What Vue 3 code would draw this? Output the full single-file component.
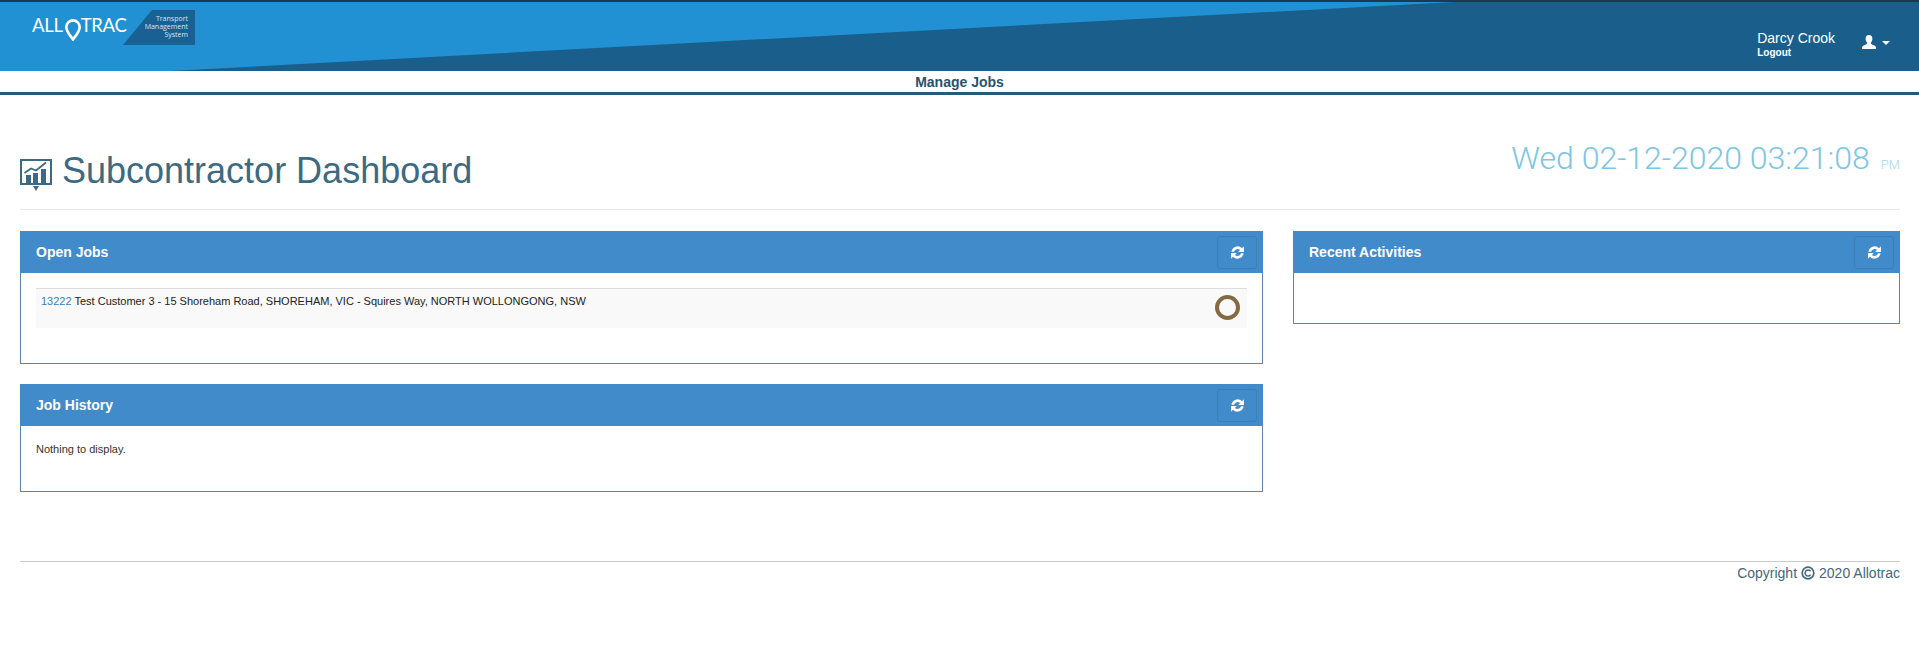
<script setup>
const refreshPath = "M2.6 8.2A6.6 6.6 0 0 1 13.8 4.4L15.8 2.4V8.6H9.6L11.8 6.4A3.9 3.9 0 0 0 5.3 8.2ZM15.4 9.8A6.6 6.6 0 0 1 4.2 13.6L2.2 15.6V9.4H8.4L6.2 11.6A3.9 3.9 0 0 0 12.7 9.8Z";
</script>

<template>
  <div class="page">
    <header class="topbar">
      <svg class="wedge" viewBox="0 0 1919 69" preserveAspectRatio="none" aria-hidden="true">
        <polygon points="170,69 1455,0 1919,0 1919,69" fill="#1a5f8c" />
      </svg>
      <div class="brand">
        <div class="wordmark">
          <span>ALL</span>
          <svg class="pin" viewBox="0 0 17 23" preserveAspectRatio="none" aria-hidden="true">
            <path d="M8.5 1.4A7.1 7.1 0 0 0 1.4 8.5C1.4 13 6 17.8 8.5 21.4C11 17.8 15.6 13 15.6 8.5A7.1 7.1 0 0 0 8.5 1.4Z" fill="none" stroke="#fff" stroke-width="2.8" />
          </svg>
          <span>TRAC</span>
        </div>
        <div class="tagline">
          <span>Transport</span>
          <span>Management</span>
          <span>System</span>
        </div>
      </div>
      <div class="user">
        <div class="user-text">
          <span class="user-name">Darcy Crook</span>
          <span class="logout">Logout</span>
        </div>
        <svg class="user-icon" viewBox="0 0 16 16" aria-hidden="true">
          <path d="M8 1C5.8 1 4.6 2.6 4.6 4.7C4.6 6.3 5.3 7.8 6.2 8.6C6.3 9.4 6 10 5 10.5C3.5 11.1 1.5 11.5 1 13.2V15H15V13.2C14.5 11.5 12.5 11.1 11 10.5C10 10 9.7 9.4 9.8 8.6C10.7 7.8 11.4 6.3 11.4 4.7C11.4 2.6 10.2 1 8 1Z" fill="#fff" />
        </svg>
        <span class="caret"></span>
      </div>
    </header>

    <nav class="subnav"><span>Manage Jobs</span></nav>

    <main class="content">
      <div class="title-row">
        <h1 class="title">
          <svg class="title-icon" viewBox="0 0 32 32" aria-hidden="true">
            <rect x="1" y="1" width="30" height="24" fill="none" stroke="#3c6a82" stroke-width="2" />
            <rect x="6" y="16" width="5" height="8" fill="#3c6a82" />
            <rect x="13" y="14" width="5" height="10" fill="#3c6a82" />
            <rect x="21" y="10" width="5" height="14" fill="#3c6a82" />
            <path d="M4.5 14L11 9.5L16 11.5L26 3.5" fill="none" stroke="#3c6a82" stroke-width="1.8" />
            <polygon points="13,27 19,27 16,32" fill="#3c6a82" />
          </svg>
          <span>Subcontractor Dashboard</span>
        </h1>
        <div class="clock">Wed 02-12-2020 03:21:08<small>PM</small></div>
      </div>

      <div class="columns">
        <div class="col-main">
          <section class="panel panel-open">
            <div class="panel-head">
              <h2>Open Jobs</h2>
              <button class="refresh" type="button" aria-label="Refresh">
                <svg viewBox="0 0 18 18" aria-hidden="true"><path :d="refreshPath" fill="#fff" /></svg>
              </button>
            </div>
            <div class="panel-body">
              <div class="job">
                <p class="job-text"><a class="job-id">13222</a> Test Customer 3 - 15 Shoreham Road, SHOREHAM, VIC - Squires Way, NORTH WOLLONGONG, NSW</p>
                <span class="status"></span>
              </div>
            </div>
          </section>

          <section class="panel panel-history">
            <div class="panel-head">
              <h2>Job History</h2>
              <button class="refresh" type="button" aria-label="Refresh">
                <svg viewBox="0 0 18 18" aria-hidden="true"><path :d="refreshPath" fill="#fff" /></svg>
              </button>
            </div>
            <div class="panel-body"><p class="empty">Nothing to display.</p></div>
          </section>
        </div>

        <div class="col-side">
          <section class="panel panel-recent">
            <div class="panel-head">
              <h2>Recent Activities</h2>
              <button class="refresh" type="button" aria-label="Refresh">
                <svg viewBox="0 0 18 18" aria-hidden="true"><path :d="refreshPath" fill="#fff" /></svg>
              </button>
            </div>
            <div class="panel-body"></div>
          </section>
        </div>
      </div>

      <footer class="footer">
        <span>Copyright</span>
        <svg class="copy" viewBox="0 0 14 14" aria-hidden="true">
          <circle cx="7" cy="7" r="5.8" fill="none" stroke="#44687c" stroke-width="1.7" />
          <path d="M9.6 8.6A3 3 0 1 1 9.6 5.4" fill="none" stroke="#44687c" stroke-width="1.5" />
        </svg>
        <span>2020 Allotrac</span>
      </footer>
    </main>
  </div>
</template>

<style>
html, body { margin: 0; background: #fff; }
</style>

<style scoped>
.page {
  width: 1919px;
  height: 648px;
  overflow: hidden;
  font-family: "Liberation Sans", Arial, sans-serif;
  background: #fff;
}
.topbar {
  position: relative;
  box-sizing: border-box;
  height: 71px;
  border-top: 2px solid #1c3a4e;
  background: #2191d3;
  display: flex;
  justify-content: space-between;
  align-items: flex-start;
}
.wedge { position: absolute; inset: 0; width: 100%; height: 100%; }
.brand {
  position: relative;
  display: flex;
  align-items: flex-start;
  margin: 8px 0 0 32px;
}
.wordmark {
  display: flex;
  align-items: flex-start;
  width: 91px;
  height: 34px;
  padding-top: 5px;
  box-sizing: border-box;
  font-family: Lato, sans-serif;
  font-size: 18.5px;
  line-height: 20px;
  color: #fff;
  letter-spacing: -0.3px;
}
.pin { width: 16px; height: 22px; margin: 4px 0 0 2px; flex: none; }
.tagline {
  width: 72px;
  height: 35px;
  box-sizing: border-box;
  padding: 5px 7px 0 0;
  background: #1a6193;
  clip-path: polygon(29px 0, 100% 0, 100% 100%, 0 100%);
  display: flex;
  flex-direction: column;
  align-items: flex-end;
  font-family: "Open Sans", sans-serif;
  font-size: 7px;
  line-height: 8px;
  color: #d6e6f0;
}
.user {
  position: relative;
  display: flex;
  align-items: flex-start;
  margin: 28px 29px 0 0;
}
.user-text { display: flex; flex-direction: column; color: #fff; }
.user-name { font-size: 14px; line-height: 17px; }
.logout { font-size: 10px; font-weight: 700; line-height: 12px; }
.user-icon { width: 16px; height: 16px; margin: 4px 0 0 26px; }
.caret {
  width: 0;
  height: 0;
  margin: 11px 0 0 5px;
  border-left: 4px solid transparent;
  border-right: 4px solid transparent;
  border-top: 4px solid #fff;
}
.subnav {
  height: 21px;
  border-bottom: 3px solid #275a78;
  display: flex;
  justify-content: center;
  align-items: center;
  font-size: 14px;
  font-weight: 700;
  color: #27536e;
}
.content { padding: 0 19px 0 20px; }
.title-row {
  height: 115px;
  box-sizing: border-box;
  border-bottom: 1px solid #e9e9e9;
  display: flex;
  justify-content: space-between;
  align-items: flex-start;
}
.title {
  margin: 55px 0 0;
  display: flex;
  align-items: flex-start;
  font-size: 36px;
  font-weight: 400;
  line-height: 42px;
  color: #3c6a82;
}
.title-icon { width: 32px; height: 32px; margin: 9px 10px 0 0; }
.clock {
  margin-top: 44px;
  font-family: Roboto, sans-serif;
  font-weight: 300;
  font-size: 32px;
  line-height: 38px;
  color: #7cc6e2;
  white-space: nowrap;
}
.clock small {
  margin-left: 11px;
  font-size: 13px;
  font-weight: 300;
  color: #a9d5e6;
}
.columns {
  display: flex;
  gap: 30px;
  margin-top: 21px;
  align-items: flex-start;
}
.col-main { width: 1243px; display: flex; flex-direction: column; gap: 20px; }
.col-side { width: 607px; }
.panel { box-sizing: border-box; border: 1px solid #5b86a8; border-top: 0; background: #fff; }
.panel-open { height: 133px; }
.panel-history { height: 108px; }
.panel-recent { height: 93px; }
.panel-head {
  height: 42px;
  margin: 0 -1px;
  background: #428bca;
  display: flex;
  justify-content: space-between;
  align-items: center;
  padding: 0 6px 0 16px;
}
.panel-head h2 { margin: 0; font-size: 14px; font-weight: 700; color: #fff; }
.refresh {
  width: 40px;
  height: 33px;
  padding: 0;
  background: #428bca;
  border: 1px solid #3b7fb9;
  border-radius: 3px;
  display: flex;
  justify-content: center;
  align-items: center;
}
.refresh svg { width: 17px; height: 17px; }
.panel-body { padding: 15px 15px 0; }
.job {
  position: relative;
  height: 40px;
  box-sizing: border-box;
  border-top: 1px solid #ddd;
  background: #f9f9f9;
  padding: 5px;
}
.job-text { margin: 0; font-size: 11px; line-height: 14px; color: #222; }
.job-id { color: #4180b5; }
.status {
  position: absolute;
  right: 7px;
  top: 6px;
  box-sizing: border-box;
  width: 25px;
  height: 25px;
  border: 4px solid #846a42;
  border-radius: 50%;
}
.empty { margin: 1px 0 0; font-size: 11px; line-height: 14px; color: #333; }
.footer {
  margin-top: 69px;
  border-top: 1px solid #ccc;
  display: flex;
  justify-content: flex-end;
  align-items: center;
  gap: 4px;
  padding-top: 2px;
  font-size: 14px;
  line-height: 18px;
  color: #44687c;
}
.copy { width: 14px; height: 14px; }
</style>
